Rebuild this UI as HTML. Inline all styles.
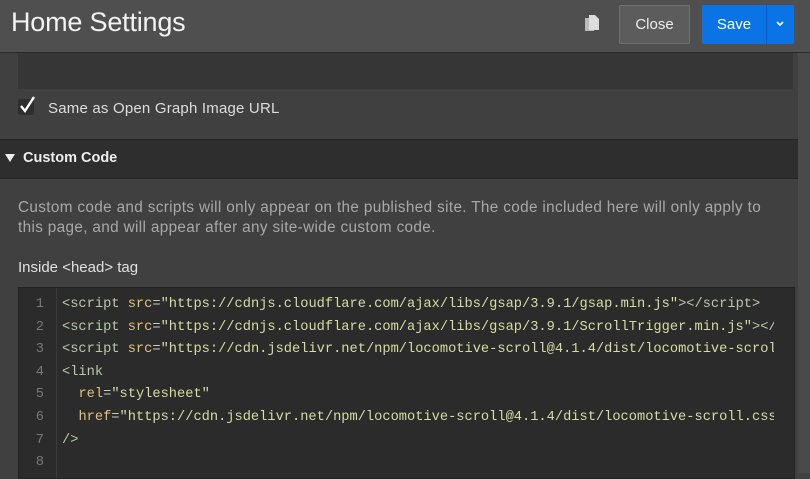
<!DOCTYPE html><html><head><style>
body{margin:0;width:810px;height:473px;overflow:hidden;background:#404040;font-family:"Liberation Sans",sans-serif;position:relative}
.a{position:absolute}
.code{font-family:"Liberation Mono",monospace;font-size:13.7px;line-height:22.6px;white-space:pre}
.t{color:#b7c9a8}.at{color:#e5c07b}.s{color:#d7dca2}.p{color:#c8c8c8}
</style></head><body>
<div class="a" style="left:0;top:0;width:810px;height:52px;background:#4f4f4f;border-bottom:1px solid #2a2a2a"></div>
<div class="a" style="left:11px;top:7px;font-size:27px;color:#f2f2f2;letter-spacing:-0.2px">Home Settings</div>
<svg class="a" style="left:584px;top:14px" width="18" height="20" viewBox="0 0 18 20"><rect x="1" y="4" width="9" height="13" fill="#bbb"/><path d="M5 1h6l4 4v11H5z" fill="#ddd"/></svg>
<div class="a" style="left:619px;top:5px;width:69px;height:37px;background:#5c5c5c;border:1px solid #707070;border-radius:2px;color:#eee;font-size:15px;line-height:37px;text-align:center">Close</div>
<div class="a" style="left:702px;top:5px;width:92px;height:39px;background:#0a73e6;border-radius:2px"></div>
<div class="a" style="left:702px;top:5px;width:64px;height:39px;color:#fff;font-size:15px;line-height:39px;text-align:center">Save</div>
<div class="a" style="left:766px;top:5px;width:1px;height:39px;background:#0558b8"></div>
<svg class="a" style="left:775px;top:20px" width="10" height="8"><path d="M2 2l3 3 3-3" stroke="#fff" stroke-width="1.6" fill="none"/></svg>
<div class="a" style="left:798px;top:53px;width:12px;height:420px;background:#4a4a4a"></div>
<div class="a" style="left:18px;top:53px;width:775px;height:36px;background:#363636"></div>
<div class="a" style="left:18px;top:99px;width:16px;height:16px;background:#2e2e2e;border-radius:2px"></div>
<svg class="a" style="left:18px;top:95px" width="20" height="20"><path d="M3 11l4 5 9-14" stroke="#fff" stroke-width="2.4" fill="none"/></svg>
<div class="a" style="left:48px;top:100px;font-size:15px;color:#ddd;letter-spacing:0.2px">Same as Open Graph Image URL</div>
<div class="a" style="left:0;top:139px;width:798px;height:38px;background:#2e2e2e;border-top:1px solid #262626;border-bottom:1px solid #262626"></div>
<svg class="a" style="left:4px;top:153px" width="12" height="10"><path d="M1 1h10l-5 8z" fill="#eee"/></svg>
<div class="a" style="left:23px;top:150px;font-size:14.5px;font-weight:bold;color:#eee">Custom Code</div>
<div class="a" style="left:18px;top:198px;width:755px;font-size:15.3px;line-height:20px;color:#a8a8a8;letter-spacing:0.35px">Custom code and scripts will only appear on the published site. The code included here will only apply to this page, and will appear after any site-wide custom code.</div>
<div class="a" style="left:18px;top:259px;font-size:15px;color:#e0e0e0">Inside &lt;head&gt; tag</div>
<div class="a" style="left:18px;top:287px;width:775px;height:190px;background:#2b2b2b;border:1px solid #222"></div>
<div class="a" style="left:56px;top:288px;width:1px;height:190px;background:#3a3a3a"></div>
<div class="a code" style="left:20px;top:294px;width:24px;text-align:right;color:#777">1
2
3
4
5
6
7
8</div>
<div class="a code" style="left:62px;top:294px;width:712px;overflow:hidden"><span class="t">&lt;script</span> <span class="at">src</span><span class="p">=</span><span class="s">"https://cdnjs.cloudflare.com/ajax/libs/gsap/3.9.1/gsap.min.js"</span><span class="t">&gt;&lt;/script&gt;</span>
<span class="t">&lt;script</span> <span class="at">src</span><span class="p">=</span><span class="s">"https://cdnjs.cloudflare.com/ajax/libs/gsap/3.9.1/ScrollTrigger.min.js"</span><span class="t">&gt;&lt;/script&gt;</span>
<span class="t">&lt;script</span> <span class="at">src</span><span class="p">=</span><span class="s">"https://cdn.jsdelivr.net/npm/locomotive-scroll@4.1.4/dist/locomotive-scroll.min.js"</span><span class="t">&gt;&lt;/script&gt;</span>
<span class="t">&lt;link</span>
  <span class="at">rel</span><span class="p">=</span><span class="s">"stylesheet"</span>
  <span class="at">href</span><span class="p">=</span><span class="s">"https://cdn.jsdelivr.net/npm/locomotive-scroll@4.1.4/dist/locomotive-scroll.css"</span>
<span class="t">/&gt;</span>
</div>
</body></html>
